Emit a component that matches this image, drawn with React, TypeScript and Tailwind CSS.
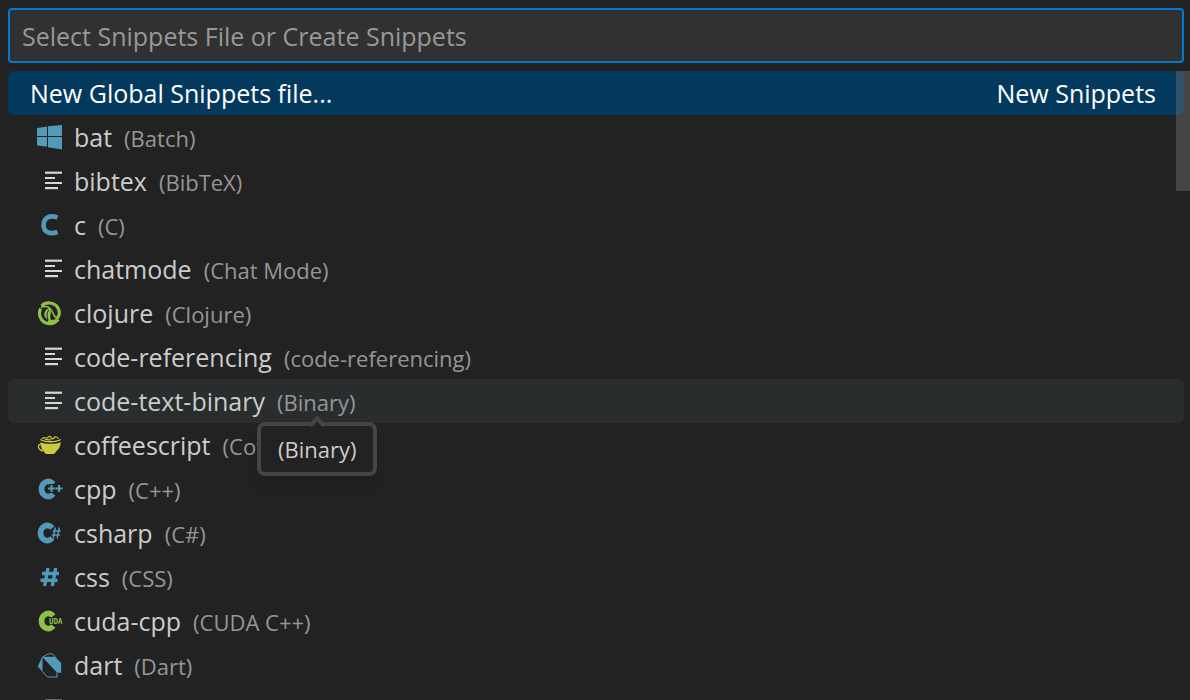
import type { ReactNode } from "react";

type Snippet = {
  name: string;
  description: string;
  icon: ReactNode;
  hovered?: boolean;
};

const blue = "#519aba";
const green = "#8dc149";
const yellow = "#cbcb41";

function LinesIcon() {
  return (
    <g fill="#d4d7d6">
      <rect x="9" y="4.6" width="17" height="2.2" />
      <rect x="9" y="10" width="10" height="2" />
      <rect x="9" y="15" width="17" height="2" />
      <rect x="9" y="20" width="13" height="2.2" />
    </g>
  );
}

function WindowsIcon() {
  return (
    <path
      fill={blue}
      d="M1 5 11 3.5v9.500H1zM12 3.300 26 2v11H12zM1 14h10v9.800L1 22.500zM12 14h14v12.500l-14-2.200z"
    />
  );
}

function CIcon() {
  return <path fill="none" stroke={blue} strokeWidth="4.6" d="M21.500 6.600C13.500 3.500 7.600 7 7.600 14S13.500 23.800 21.500 21" />;
}

// Shared ring of the C++, C# and CUDA logos
function LogoRing({ color, x }: { color: string; x: number }) {
  return (
    <path
      transform={`translate(${x} 0)`}
      fill="none"
      stroke={color}
      strokeWidth="5.6"
      d="M15.300 9C12.800 6.200 9.800 6 7.800 7 2 10 2 18 7.800 21c2 1 5 .8 7.500-2"
    />
  );
}

function CppIcon() {
  return (
    <>
      <LogoRing color={blue} x={2} />
      <path stroke="#222222" strokeWidth="4" d="M11 13.500h9M15.500 9v9" />
      <path stroke={blue} strokeWidth="2" d="M12 13.500h7M15.500 10v7M19.500 13.500h7M23 10v7" />
    </>
  );
}

function CSharpIcon() {
  return (
    <>
      <LogoRing color={blue} x={1} />
      <path stroke="#222222" strokeWidth="3" d="M16 12h9M15.500 16h9" />
      <path stroke={blue} strokeWidth="1.5" d="M19.300 8.500 17.300 19.300M23.200 8.500 21.200 19.300M16.500 12h8.300M15.800 16h8.300" />
    </>
  );
}

function CssIcon() {
  return <path stroke={blue} strokeWidth="3.4" d="M12 5 8.600 23M19.700 5 16.300 23M6 10.500h17M4.500 17.300h17" />;
}

function CudaIcon() {
  return (
    <>
      <LogoRing color={green} x={2} />
      <rect x="12.5" y="10" width="14" height="7.5" fill="#222222" />
      <text
        x="13"
        y="17"
        fill={green}
        fontSize="8"
        fontWeight="700"
        fontFamily="'Open Sans Condensed', 'Liberation Sans Narrow', sans-serif"
      >
        UDA
      </text>
    </>
  );
}

function ClojureIcon() {
  return (
    <g fill="none" stroke={green}>
      <path strokeWidth="3.2" d="M5.600 6.800C10 2.600 18 3 21.700 8.500c2.200 3.500 2.200 7-.2 10.500" />
      <path strokeWidth="3.2" d="M22.200 20.200C18 26 9.500 26 5.500 20.500 3 17 3 13 4.600 9.500" />
      <path strokeWidth="1.5" d="M5 8.500c4.500-2.500 9-.5 11 3.500s2.500 7.500 6.200 7.200" />
      <path strokeWidth="3" d="M12 22c3 .9 6.500.6 9-1.300" />
      <path fill={green} stroke="none" d="M12.800 9.200c2.200 1.400 2.600 4 1.800 6.300-.6 2-.4 4 .6 5.500-3 .2-5.800-1.200-6.700-4-.8-3 .8-6.500 4.300-7.800z" />
      <path stroke="#222222" strokeWidth="1" d="M12.600 11c-1.800 3-2 6.500-.8 9.500" />
    </g>
  );
}

function CoffeeIcon() {
  return (
    <>
      <path
        fill={yellow}
        d="M4.200 11.200c5 2.200 15.600 2.200 20.600 0-.4 5-2.800 7.600-4.800 9.400-.4 1.400-1.600 2.200-3 2.400h-6c-1.600-.2-2.600-1.200-3-2.600-2-1.800-3.600-4.600-3.800-9.200z"
      />
      <path fill="none" stroke={yellow} strokeWidth="1.3" d="M4.200 8.500c5 3 15.800 3 20.600 0M4.500 13.400c-3.600 0-2.400 5.800 2.600 6.800" />
      <path fill="none" stroke={yellow} strokeWidth="1.2" d="M6 7.900c2-2.600 4 .4 6-1.600s3.600-.6 3 .8 3.200 1 3-.6c1.600-1.200 3.600-.4 4.400 1.200M9 8.800c2-1 3.200.6 5.600 0" />
    </>
  );
}

function DartIcon() {
  return (
    <>
      <path fill={blue} d="M6 5.800h13l6.200 6.200v9.800h-4z" />
      <path fill={blue} d="M6 6.500 1.700 15.500 6 20z" />
      <path
        fill="none"
        stroke={blue}
        strokeWidth="1"
        d="M6 6.500 11 3.500 14 2.500l3 .8 2.500 3M6 6.500v13.500l5.500 6h9.500V21.500"
      />
    </>
  );
}

const snippets: Snippet[] = [
  { name: "bat", description: "(Batch)", icon: <WindowsIcon /> },
  { name: "bibtex", description: "(BibTeX)", icon: <LinesIcon /> },
  { name: "c", description: "(C)", icon: <CIcon /> },
  { name: "chatmode", description: "(Chat Mode)", icon: <LinesIcon /> },
  { name: "clojure", description: "(Clojure)", icon: <ClojureIcon /> },
  { name: "code-referencing", description: "(code-referencing)", icon: <LinesIcon /> },
  { name: "code-text-binary", description: "(Binary)", icon: <LinesIcon />, hovered: true },
  { name: "coffeescript", description: "(CoffeeScript)", icon: <CoffeeIcon /> },
  { name: "cpp", description: "(C++)", icon: <CppIcon /> },
  { name: "csharp", description: "(C#)", icon: <CSharpIcon /> },
  { name: "css", description: "(CSS)", icon: <CssIcon /> },
  { name: "cuda-cpp", description: "(CUDA C++)", icon: <CudaIcon /> },
  { name: "dart", description: "(Dart)", icon: <DartIcon /> },
  { name: "", description: "", icon: <LinesIcon /> },
];

function Tooltip({ text }: { text: string }) {
  return (
    <span
      role="tooltip"
      className="absolute -left-5 top-9 z-10 rounded-lg border-4 border-[#454545] bg-[#222222] px-[17px] py-2 leading-[30px] text-[#cccccc] shadow-lg"
    >
      <svg className="absolute -top-[11px] left-1/2 -ml-2" width="16" height="12" viewBox="0 0 16 12" aria-hidden="true">
        <path d="M1 11 8 3.500l7 7.500" fill="#222222" stroke="#454545" strokeWidth="4" />
      </svg>
      {text}
    </span>
  );
}

function SnippetRow({ name, description, icon, hovered }: Snippet) {
  return (
    <li>
      <button
        type="button"
        className={`flex h-11 w-full items-center rounded-md pl-7 text-left ${hovered ? "bg-[#2a2d2e]" : ""}`}
      >
        <svg className="mr-[10px] shrink-0" width="28" height="28" viewBox="0 0 28 28" aria-hidden="true">
          {icon}
        </svg>
        <span className="flex items-baseline gap-3">
          <span className="text-[25px] leading-8">{name}</span>
          <span className="relative text-[22px] leading-8 text-[#969696]">
            {description}
            {hovered && <Tooltip text={description} />}
          </span>
        </span>
      </button>
    </li>
  );
}

export default function App() {
  return (
    <div className="flex h-screen flex-col overflow-hidden bg-[#222222] pt-2 font-['Open_Sans','Noto_Sans',sans-serif] text-[#cccccc]">
      <div className="flex pl-2 pr-[6px]">
        <input
          type="text"
          aria-label="Select Snippets File or Create Snippets"
          placeholder="Select Snippets File or Create Snippets"
          className="h-[55px] w-full rounded-[4px] border-2 border-[#0078d4] bg-[#313131] px-3 text-[25px] outline-none placeholder:text-[#989898]"
        />
      </div>

      <div className="relative mt-2 min-h-0 flex-1 overflow-hidden pl-2 pr-[6px]">
        <ul>
          <li>
            <button
              type="button"
              className="flex h-11 w-full items-center justify-between rounded-md bg-[#04395e] pl-[22px] pr-7 text-[25px] leading-8 text-white"
            >
              <span>New Global Snippets file...</span>
              <span>New Snippets</span>
            </button>
          </li>
          {snippets.map((snippet, i) => (
            <SnippetRow key={i} {...snippet} />
          ))}
        </ul>
        {/* Scrollbar thumb */}
        <div className="absolute right-0 top-0 h-[120px] w-[14px] bg-[#797979]/40" />
      </div>
    </div>
  );
}
